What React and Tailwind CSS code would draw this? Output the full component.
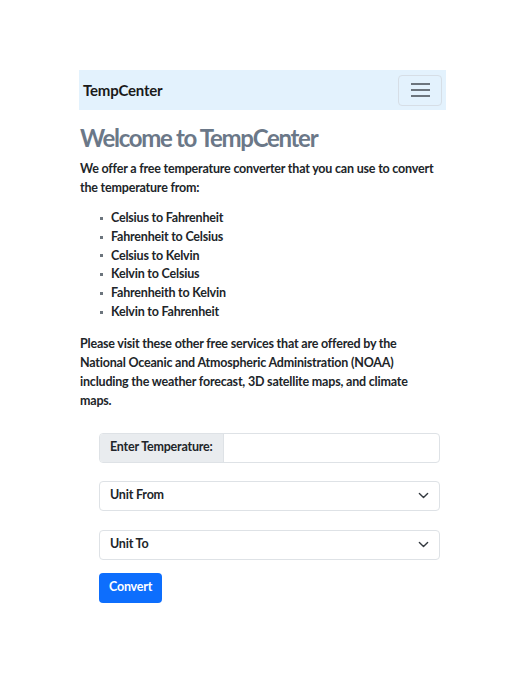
import React from "react";

const conversions = [
  "Celsius to Fahrenheit",
  "Fahrenheit to Celsius",
  "Celsius to Kelvin",
  "Kelvin to Celsius",
  "Fahrenheith to Kelvin",
  "Kelvin to Fahrenheit",
];

const Chevron = () => (
  <svg width="11" height="11" viewBox="0 0 16 16" fill="none">
    <path
      d="M2 5l6 6 6-6"
      stroke="#343a40"
      strokeWidth="2"
      strokeLinecap="round"
      strokeLinejoin="round"
    />
  </svg>
);

export default function App() {
  return (
    <div
      className="min-h-[675px] bg-white text-[#212529]"
      style={{ fontFamily: 'Lato, "Noto Sans", sans-serif' }}
    >
      <div className="pt-[70px] px-[79px] w-[525px]">
        {/* navbar */}
        <nav className="h-[40px] bg-[#e3f2fd] flex items-center justify-between pl-[4px] pr-[4px]">
          <span className="text-[15px] font-bold tracking-[-0.2px] text-[#1a1a1a]">
            TempCenter
          </span>
          <button className="w-[44px] h-[31px] rounded-[4px] border border-[#d6dee6] flex flex-col items-center justify-center gap-[4px]">
            <span className="block w-[19px] h-[2px] bg-[#6c757d]" />
            <span className="block w-[19px] h-[2px] bg-[#6c757d]" />
            <span className="block w-[19px] h-[2px] bg-[#6c757d]" />
          </button>
        </nav>

        <h1 className="mt-[12px] text-[24px] leading-[32px] font-bold tracking-[-1.3px] text-[#6b7888] pl-px">
          Welcome to TempCenter
        </h1>

        <div className="text-[12.5px] font-bold tracking-[-0.2px]">
          <p className="mt-[5px] leading-[19px] pl-px pr-[8px]">
            We offer a free temperature converter that you can use to convert
            the temperature from:
          </p>

          <ul className="mt-[12px] pl-[31px] leading-[18.8px]">
            {conversions.map((c) => (
              <li key={c} className="flex items-center">
                <span className="w-[3px] h-[3px] bg-[#6c757d] mr-[8px] -ml-[10px]" />
                {c}
              </li>
            ))}
          </ul>

          <p className="mt-[12px] leading-[19px] pl-px pr-[8px]">
            Please visit these other free services that are offered by the
            National Oceanic and Atmospheric Administration (NOAA) including the
            weather forecast, 3D satellite maps, and climate maps.
          </p>

          <form className="mt-[23px] ml-[20px] mr-[6px] flex flex-col">
            <div className="flex h-[30px] rounded-[4px] border border-[#dee2e6] overflow-hidden">
              <label className="bg-[#e9ecef] border-r border-[#dee2e6] px-[10px] flex items-center whitespace-nowrap">
                Enter Temperature:
              </label>
              <input className="flex-1 min-w-0 outline-none" />
            </div>
            <div className="mt-[18px] h-[30px] rounded-[4px] border border-[#dee2e6] flex items-center justify-between px-[10px]">
              <span>Unit From</span>
              <Chevron />
            </div>
            <div className="mt-[19px] h-[30px] rounded-[4px] border border-[#dee2e6] flex items-center justify-between px-[10px]">
              <span>Unit To</span>
              <Chevron />
            </div>
            <div className="mt-[13px]">
              <button
                type="button"
                className="h-[30px] px-[10px] rounded-[4px] bg-[#0d6efd] text-white font-bold"
              >
                Convert
              </button>
            </div>
          </form>
        </div>
      </div>
    </div>
  );
}
